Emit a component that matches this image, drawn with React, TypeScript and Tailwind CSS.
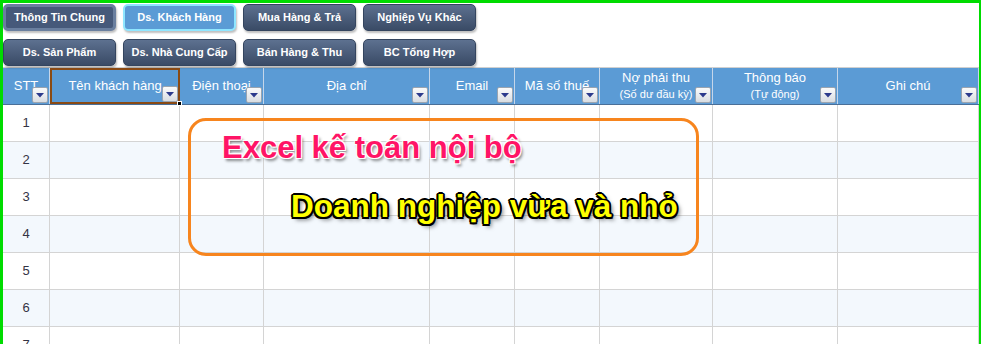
import React from "react";

const navButtons = [
    {label: "Thông Tin Chung", kind: "dark-active"},
    {label: "Ds. Khách Hàng", kind: "current"},
    {label: "Mua Hàng & Trả", kind: "dark"},
    {label: "Nghiệp Vụ Khác", kind: "dark"},
    {label: "Ds. Sản Phẩm", kind: "dark"},
    {label: "Ds. Nhà Cung Cấp", kind: "dark"},
    {label: "Bán Hàng & Thu", kind: "dark"},
    {label: "BC Tổng Hợp", kind: "dark"},
];

type Col = {title: string; sub?: string; width: string};

const columns: Col[] = [
    {title: "STT", width: "47px"},
    {title: "Tên khách hàng", width: "130px"},
    {title: "Điện thoại", width: "84px"},
    {title: "Địa chỉ", width: "166px"},
    {title: "Email", width: "85px"},
    {title: "Mã số thuế", width: "85px"},
    {title: "Nợ phải thu", sub: "(Số dư đầu kỳ)", width: "113px"},
    {title: "Thông báo", sub: "(Tự động)", width: "125px"},
    {title: "Ghi chú", width: "141px"},
];

const rows = [1, 2, 3, 4, 5, 6, 7];

function NavButton({label, kind}: {label: string; kind: string}) {
    const base = "h-[27px] w-[113px] rounded-[5px] flex items-center justify-center text-[11px] font-bold text-white shadow-[1px_2px_2px_rgba(0,0,0,0.25)]";
    if (kind === "current") {
        return (
            <div className={`${base} bg-[#5b9bd5] border-2 border-[#8fe6ff] text-[#f4f8ff]`}>
                {label}
            </div>
        );
    }
    if (kind === "dark-active") {
        return (
            <div className={`${base} bg-[#46597a] border-[3px] border-[#6a7f9f] text-[#eef2f8]`}>
                {label}
            </div>
        );
    }
    return (
        <div className={`${base} bg-gradient-to-b from-[#5d7190] to-[#3a4b66] border border-[#34455f] text-[#f0f3f8]`}>
            {label}
        </div>
    );
}

function FilterArrow() {
    return (
        <div className="absolute right-[1px] bottom-[1px] w-[16px] h-[16px] rounded-[2px] border border-[#9aa4b0] bg-gradient-to-b from-[#fbfbfb] to-[#d9dde2] flex items-center justify-center">
            <svg width="8" height="5" viewBox="0 0 8 5">
                <polygon points="0,0 8,0 4,4.5" fill="#2c3a8c"/>
            </svg>
        </div>
    );
}

export default function App() {
    const template = columns.map(c => c.width).join(" ");
    return (
        <div className="w-[981px] h-[344px] overflow-hidden relative bg-white border-t-[3px] border-l-[3px] border-r-[2px] border-[#00dc00] font-['Liberation_Sans',Arial,sans-serif]">
            <div className="grid grid-cols-[113px_113px_113px_113px] gap-x-[7px] gap-y-[6px] pt-[1px] h-[64px]">
                {navButtons.map(b => <NavButton key={b.label} label={b.label} kind={b.kind}/>)}
            </div>

            <div className="border-t border-[#d0d0d0]">
                <div className="grid h-[37px] bg-[#5b9bd5] border-b border-[#4a6f98]" style={{gridTemplateColumns: template}}>
                    {columns.map((c, i) => (
                        <div key={c.title} className={`relative flex flex-col items-center justify-center text-white border-r border-[#c5d6ea] ${i === 1 ? "outline outline-2 outline-[#8a4a14] -outline-offset-2 border border-black" : ""}`}>
                            <span className="text-[13px] leading-[15px] -mt-[1px]">{c.title}</span>
                            {c.sub && <span className="text-[11px] leading-[14px] mt-[2px]">{c.sub}</span>}
                            <FilterArrow/>
                            {i === 1 && <div className="absolute -right-[3px] -bottom-[3px] w-[5px] h-[5px] bg-black border border-white"/>}
                        </div>
                    ))}
                </div>

                {rows.map(r => (
                    <div key={r} className={`grid h-[37px] border-b border-[#d4d4d4] ${r % 2 === 0 ? "bg-[#f3f8fd]" : "bg-white"}`} style={{gridTemplateColumns: template}}>
                        {columns.map((c, i) => (
                            <div key={c.title} className="border-r border-[#d4d4d4] flex items-center justify-center text-[13px] text-[#333344]">
                                {i === 0 ? r : null}
                            </div>
                        ))}
                    </div>
                ))}
            </div>

            <div className="absolute left-[185px] top-[115px] w-[511px] h-[138px] rounded-[18px] border-[3px] border-[#f7851e]">
                <div className="pl-[31px] pt-[9px] text-[31px] font-bold leading-[35px] whitespace-nowrap text-[#ff1466] [text-shadow:1px_1px_0_#fff,-1px_-1px_0_#fff,1px_-1px_0_#fff,-1px_1px_0_#fff,2px_3px_3px_rgba(0,0,0,0.45)]">
                    Excel kế toán nội bộ
                </div>
                <div className="pl-[100px] pt-[23px] text-[31.5px] font-bold leading-[36px] whitespace-nowrap text-[#ffff00] [text-shadow:2px_0_0_#000,-2px_0_0_#000,0_2px_0_#000,0_-2px_0_#000,1.5px_1.5px_0_#000,-1.5px_-1.5px_0_#000,1.5px_-1.5px_0_#000,-1.5px_1.5px_0_#000,3px_3px_4px_rgba(0,0,0,0.5)]">
                    Doanh nghiệp vừa và nhỏ
                </div>
            </div>
        </div>
    );
}
